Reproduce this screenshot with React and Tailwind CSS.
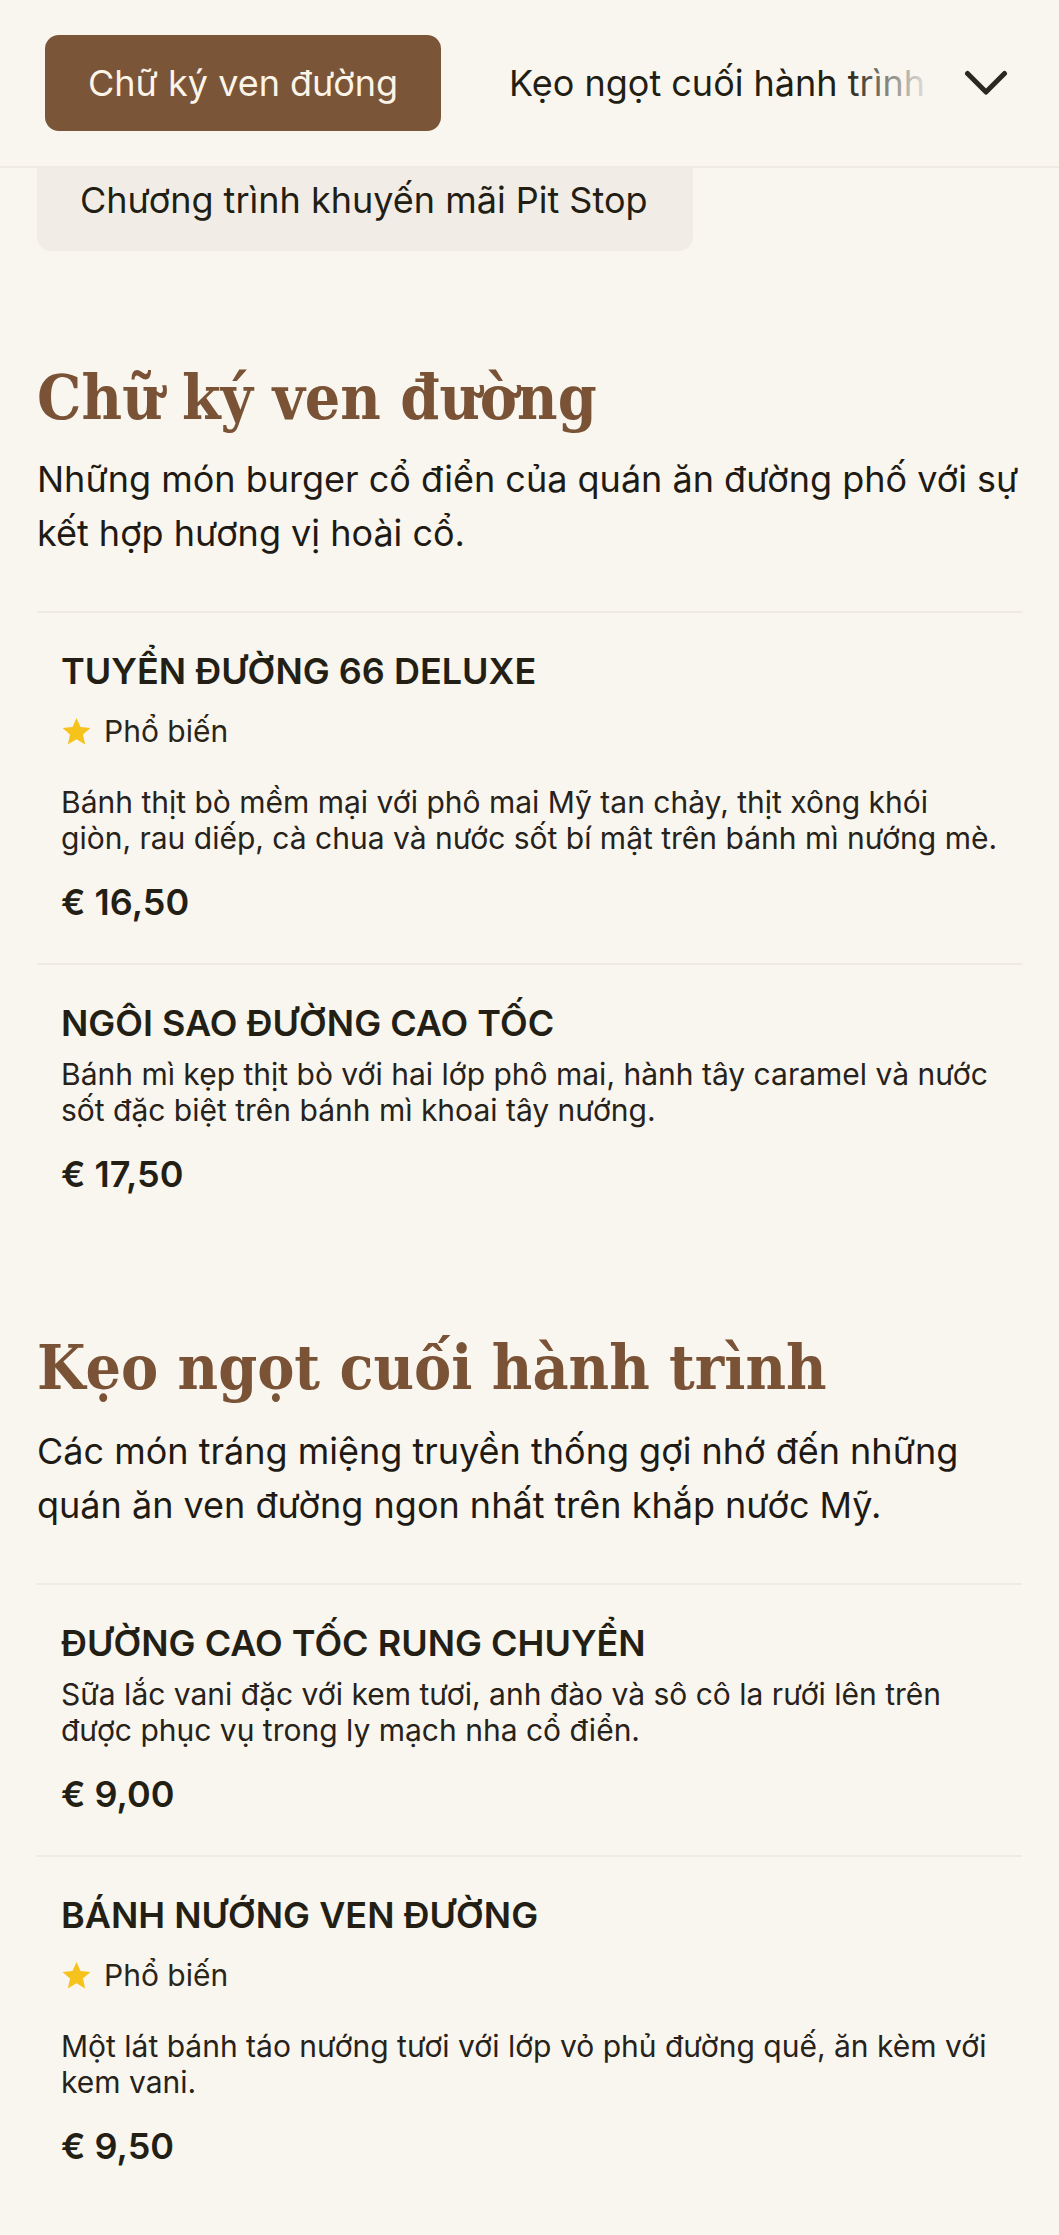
import React from 'react';

const sections = [
  {
    id: 'signature',
    title: 'Chữ ký ven đường',
    description: 'Những món burger cổ điển của quán ăn đường phố với sự kết hợp hương vị hoài cổ.',
    items: [
      {
        name: 'TUYỂN ĐƯỜNG 66 DELUXE',
        popular: true,
        description: 'Bánh thịt bò mềm mại với phô mai Mỹ tan chảy, thịt xông khói giòn, rau diếp, cà chua và nước sốt bí mật trên bánh mì nướng mè.',
        price: '€ 16,50',
      },
      {
        name: 'NGÔI SAO ĐƯỜNG CAO TỐC',
        popular: false,
        description: 'Bánh mì kẹp thịt bò với hai lớp phô mai, hành tây caramel và nước sốt đặc biệt trên bánh mì khoai tây nướng.',
        price: '€ 17,50',
      },
    ],
  },
  {
    id: 'sweets',
    title: 'Kẹo ngọt cuối hành trình',
    description: 'Các món tráng miệng truyền thống gợi nhớ đến những quán ăn ven đường ngon nhất trên khắp nước Mỹ.',
    items: [
      {
        name: 'ĐƯỜNG CAO TỐC RUNG CHUYỂN',
        popular: false,
        description: 'Sữa lắc vani đặc với kem tươi, anh đào và sô cô la rưới lên trên được phục vụ trong ly mạch nha cổ điển.',
        price: '€ 9,00',
      },
      {
        name: 'BÁNH NƯỚNG VEN ĐƯỜNG',
        popular: true,
        description: 'Một lát bánh táo nướng tươi với lớp vỏ phủ đường quế, ăn kèm với kem vani.',
        price: '€ 9,50',
      },
    ],
  },
];

const Star = () => (
  <svg width="31" height="31" viewBox="0 0 24 24" className="shrink-0">
    <polygon
      points="12,1.5 15.1,8.6 22.8,9.3 17,14.4 18.7,22 12,18 5.3,22 7,14.4 1.2,9.3 8.9,8.6"
      fill="#f6c21c"
    />
  </svg>
);

const MenuItem = ({ item }) => (
  <div className="border-t-2 border-[#efeae2] px-[24px] pt-[31px] pb-[34px]">
    <h3 className="text-[36px] leading-[54px] font-semibold text-[#241f15]">{item.name}</h3>
    {item.popular && (
      <div className="mt-[15px] flex items-center gap-[12px] h-[36px] text-[30px] text-[#2a2519]">
        <Star />
        <span>Phổ biến</span>
      </div>
    )}
    <p className={`${item.popular ? 'mt-[35px]' : 'mt-[6px]'} text-[30px] leading-[36px] text-[#27221a]`}>
      {item.description}
    </p>
    <div className="mt-[19px] text-[36px] leading-[54px] font-semibold text-[#241f15]">{item.price}</div>
  </div>
);

const App = () => {
  return (
    <div className="min-h-screen bg-[#f9f6f0] font-['Inter','Noto_Sans',sans-serif]">
      {/* Top category bar */}
      <header className="h-[168px] flex items-center border-b-2 border-[#efeae2] bg-[#f9f6f0]">
        <div className="relative flex-1 overflow-hidden">
          <div className="flex items-center gap-[25px] pl-[45px] whitespace-nowrap">
            <button className="h-[96px] px-[43px] rounded-[14px] bg-[#7b5537] text-[#fbf4e8] text-[36px] leading-[54px] shrink-0">
              Chữ ký ven đường
            </button>
            <button className="h-[96px] px-[43px] text-[#231e14] text-[36px] leading-[54px] shrink-0">
              Kẹo ngọt cuối hành trình
            </button>
          </div>
          <div className="absolute right-0 top-0 bottom-0 w-[90px] bg-linear-to-l from-[#f9f6f0] to-transparent" />
        </div>
        <button className="w-[102px] mr-[22px] h-[96px] flex items-center justify-center shrink-0">
          <svg width="44" height="26" viewBox="0 0 44 26" fill="none">
            <polyline
              points="3.5,3.5 22,22 40.5,3.5"
              stroke="#2a281f"
              strokeWidth="5"
              strokeLinecap="round"
              strokeLinejoin="round"
            />
          </svg>
        </button>
      </header>

      {/* promo tab peeking below the bar */}
      <div className="mx-[37px] w-[656px] h-[83px] rounded-b-[14px] bg-[#f1ede6] pl-[43px] pt-[5px] text-[36px] leading-[54px] text-[#231e14]">
        Chương trình khuyến mãi Pit Stop
      </div>

      <main className="px-[37px] pb-[27px]">
        {sections.map((section, i) => (
          <section key={section.id} className={i === 0 ? 'mt-[110px]' : 'mt-[96px]'}>
            <h2 className="font-['DejaVu_Serif',serif] font-bold font-stretch-condensed text-[62px] leading-[74px] text-[#7a5336]">
              {section.title}
            </h2>
            <p className={`${i === 0 ? 'mt-[17px]' : 'mt-[19px]'} text-[36px] leading-[54px] text-[#1f1b14]`}>
              {section.description}
            </p>
            <div className="mt-[51px]">
              {section.items.map((item) => (
                <MenuItem key={item.name} item={item} />
              ))}
            </div>
          </section>
        ))}
      </main>
    </div>
  );
};

export default App;
